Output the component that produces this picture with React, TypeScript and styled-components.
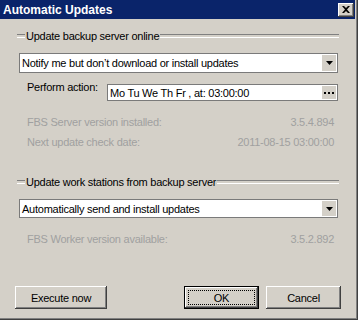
import React from 'react'
import styled, { createGlobalStyle } from 'styled-components'

const GlobalStyle = createGlobalStyle`
  html, body {
    margin: 0;
    padding: 0;
    background: #d4d0c8;
  }
  * {
    box-sizing: border-box;
  }
`

const FONT = `'Liberation Sans', Arial, sans-serif`

const Window = styled.div`
  width: 358px;
  height: 320px;
  display: flex;
  flex-direction: column;
  background: #d4d0c8;
  border-right: 1px solid #404040;
  border-bottom: 1px solid #404040;
  box-shadow: inset -1px -1px 0 #808080;
  padding-right: 2px;
  padding-bottom: 1px;
  font-family: ${FONT};
  font-size: 11px;
  letter-spacing: -0.25px;
  color: #000;
`

const TitleBar = styled.div`
  height: 19px;
  display: flex;
  align-items: center;
  justify-content: space-between;
  background: #0a246a;
  padding: 0 1px 0 3px;
`

const TitleText = styled.span`
  color: #fff;
  font-weight: bold;
  font-size: 12px;
  letter-spacing: 0;
`

const CloseButton = styled.button`
  width: 16px;
  height: 14px;
  padding: 0;
  border: none;
  background: #d4d0c8;
  box-shadow: inset -1px -1px 0 #404040, inset 1px 1px 0 #fff,
    inset -2px -2px 0 #808080;
  display: flex;
  align-items: center;
  justify-content: center;
`

const Content = styled.div`
  flex: 1;
  display: flex;
  flex-direction: column;
  padding: 10px 16px 9px 17px;
`

const GroupHeader = styled.div<{ $top: number }>`
  display: flex;
  align-items: center;
  height: 13px;
  margin-top: ${(p) => p.$top}px;
  white-space: nowrap;

  &::before,
  &::after {
    content: '';
    height: 2px;
    border-top: 1px solid #808080;
    border-bottom: 1px solid #fff;
  }
  &::before {
    width: 8px;
  }
  &::after {
    flex: 1;
  }
`

const HeaderLabel = styled.span`
  padding: 0 1px;
`

const Field = styled.div<{ $top: number; $height: number; $left?: number; $grow?: boolean }>`
  display: flex;
  align-items: stretch;
  height: ${(p) => p.$height}px;
  margin: ${(p) => p.$top}px 1px 0 ${(p) => p.$left ?? 2}px;
  background: #fff;
  border: 1px solid #7a7a7a;
  flex: ${(p) => (p.$grow ? 1 : 'none')};
`

const FieldText = styled.span`
  flex: 1;
  display: flex;
  align-items: center;
  padding-left: 2px;
  white-space: nowrap;
  overflow: hidden;
`

const SideButton = styled.span`
  width: 14px;
  margin: 1px 1px 1px 0;
  background: #d4d0c8;
  display: flex;
  align-items: center;
  justify-content: center;
`

const ActionRow = styled.div`
  display: flex;
  align-items: center;
  margin-left: 10px;
`

const ActionLabel = styled.span`
  width: 80px;
  flex: none;
  white-space: nowrap;
`

const InfoRow = styled.div<{ $top: number }>`
  display: flex;
  justify-content: space-between;
  height: 14px;
  line-height: 14px;
  margin: ${(p) => p.$top}px 5px 0 10px;
  color: #a0a0a0;
  white-space: nowrap;
`

const ButtonRow = styled.div`
  margin-top: auto;
  display: flex;
  align-items: center;
  gap: 7px;
  margin-left: -2px;
  margin-right: -2px;
`

const Button = styled.button<{ $width: number; $default?: boolean }>`
  position: relative;
  width: ${(p) => p.$width}px;
  height: 23px;
  padding: 0;
  border: none;
  background: #d4d0c8;
  font-family: ${FONT};
  font-size: 11px;
  letter-spacing: -0.25px;
  color: #000;
  box-shadow: ${(p) =>
    p.$default
      ? 'inset 0 0 0 1px #000, inset -2px -2px 0 #404040, inset 2px 2px 0 #fff, inset -3px -3px 0 #808080'
      : 'inset -1px -1px 0 #404040, inset 1px 1px 0 #fff, inset -2px -2px 0 #808080'};

  ${(p) =>
    p.$default &&
    `
    &::after {
      content: '';
      position: absolute;
      inset: 4px;
      border: 1px dotted #000;
    }
  `}
`

const Spacer = styled.div`
  flex: 1;
`

const CloseIcon = () => (
  <svg width="8" height="7" viewBox="0 0 8 7">
    <path d="M0 0h2l2 2 2-2h2L5 3.5 8 7H6L4 5 2 7H0l3-3.5z" fill="#000" />
  </svg>
)

const ArrowIcon = () => (
  <svg width="7" height="4" viewBox="0 0 7 4">
    <path d="M0 0h7L3.5 4z" fill="#000" />
  </svg>
)

const DotsIcon = () => (
  <svg width="10" height="2" viewBox="0 0 10 2">
    <rect x="0" y="0" width="2" height="2" fill="#000" />
    <rect x="4" y="0" width="2" height="2" fill="#000" />
    <rect x="8" y="0" width="2" height="2" fill="#000" />
  </svg>
)

const App = (): JSX.Element => {
  return (
    <Window>
      <GlobalStyle />
      <TitleBar>
        <TitleText>Automatic Updates</TitleText>
        <CloseButton>
          <CloseIcon />
        </CloseButton>
      </TitleBar>
      <Content>
        <GroupHeader $top={0}>
          <HeaderLabel>Update backup server online</HeaderLabel>
        </GroupHeader>
        <Field $top={11} $height={20}>
          <FieldText>Notify me but don&#8217;t download or install updates</FieldText>
          <SideButton>
            <ArrowIcon />
          </SideButton>
        </Field>
        <ActionRow>
          <ActionLabel>Perform action:</ActionLabel>
          <Field $top={11} $height={17} $left={0} $grow>
            <FieldText>Mo Tu We Th Fr , at: 03:00:00</FieldText>
            <SideButton>
              <DotsIcon />
            </SideButton>
          </Field>
        </ActionRow>
        <InfoRow $top={14}>
          <span>FBS Server version installed:</span>
          <span>3.5.4.894</span>
        </InfoRow>
        <InfoRow $top={6}>
          <span>Next update check date:</span>
          <span>2011-08-15 03:00:00</span>
        </InfoRow>
        <GroupHeader $top={26}>
          <HeaderLabel>Update work stations from backup server</HeaderLabel>
        </GroupHeader>
        <Field $top={11} $height={19}>
          <FieldText>Automatically send and install updates</FieldText>
          <SideButton>
            <ArrowIcon />
          </SideButton>
        </Field>
        <InfoRow $top={14}>
          <span>FBS Worker version available:</span>
          <span>3.5.2.892</span>
        </InfoRow>
        <ButtonRow>
          <Button $width={92}>Execute now</Button>
          <Spacer />
          <Button $width={75} $default>
            OK
          </Button>
          <Button $width={75}>Cancel</Button>
        </ButtonRow>
      </Content>
    </Window>
  )
}

export default App
